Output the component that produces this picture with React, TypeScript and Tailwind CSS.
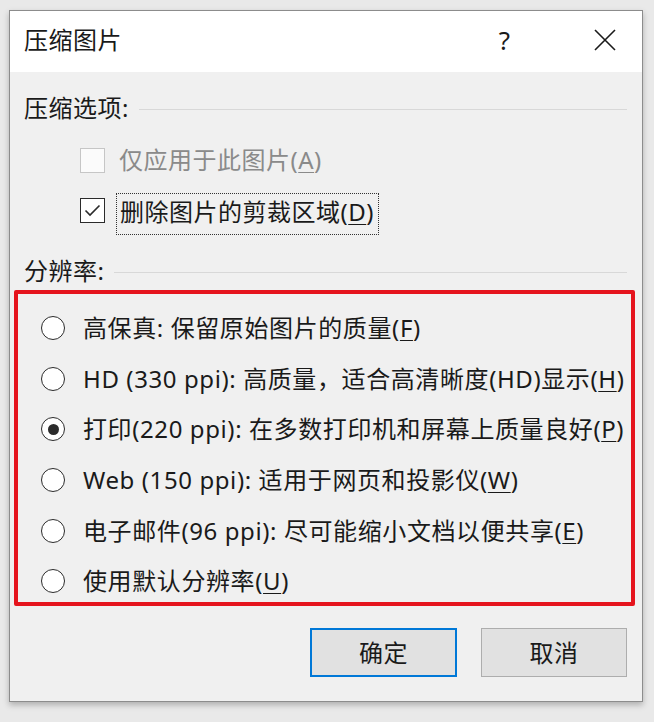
import React from 'react';

const font = { fontFamily: '"Noto Sans", "Noto Sans CJK SC", sans-serif' };

function Mn({ k }: { k: string }) {
  return (
    <span>
      (<span className="underline underline-offset-[3px] decoration-1">{k}</span>)
    </span>
  );
}

function Radio({ checked }: { checked?: boolean }) {
  return (
    <div className="w-[24px] h-[24px] rounded-full border-[1.5px] border-[#2b2b2b] bg-white flex items-center justify-center shrink-0">
      {checked && <div className="w-[11px] h-[11px] rounded-full bg-[#2b2b2b]" />}
    </div>
  );
}

function SectionHeader({ label }: { label: string }) {
  return (
    <div className="flex items-center h-[30px] pl-[14px] pr-[15px]">
      <span className="text-[24px] leading-[30px] text-[#1a1a1a] tracking-[0.5px]">{label}</span>
      <div className="flex-1 h-px bg-[#d8d8d8] ml-[10px] mt-[2px]" />
    </div>
  );
}

export default function App() {
  const options = [
    { text: '高保真: 保留原始图片的质量', key: 'F' },
    { text: 'HD (330 ppi): 高质量，适合高清晰度(HD)显示', key: 'H' },
    { text: '打印(220 ppi): 在多数打印机和屏幕上质量良好', key: 'P', checked: true },
    { text: 'Web (150 ppi): 适用于网页和投影仪', key: 'W' },
    { text: '电子邮件(96 ppi): 尽可能缩小文档以便共享', key: 'E' },
    { text: '使用默认分辨率', key: 'U' },
  ];

  return (
    <div className="w-[654px] h-[722px] bg-[#e9e9e9] pt-[10px] pl-[9px] overflow-hidden" style={font}>
      <div className="w-[634px] h-[692px] border border-[#8c8c8c] bg-[#f0f0f0] flex flex-col shadow-[0_3px_6px_rgba(0,0,0,0.25)]">
        {/* title bar */}
        <div className="h-[61px] bg-white flex items-center pl-[14px] pr-[26px] shrink-0">
          <span className="text-[24px] text-[#1a1a1a] leading-none mt-[-4px] tracking-[0.5px]">压缩图片</span>
          <span className="ml-auto text-[26px] text-[#1a1a1a] leading-none mr-[84px] mt-[-4px]">?</span>
          <svg width="22" height="22" viewBox="0 0 22 22" className="mt-[-4px]">
            <path d="M1 1 L21 21 M21 1 L1 21" stroke="#1a1a1a" strokeWidth="1.6" />
          </svg>
        </div>

        <div className="mt-[21px]">
          <SectionHeader label="压缩选项:" />
        </div>

        {/* checkboxes */}
        <div className="mt-[16px] h-[42px] flex items-center pl-[70px]">
          <div className="w-[25px] h-[25px] border-[1.5px] border-[#c6c6c6] bg-[#fbfbfb] shrink-0" />
          <span className="ml-[14px] text-[24px] leading-[30px] text-[#8a8a8a] tracking-[0.5px]">
            仅应用于此图片<Mn k="A" />
          </span>
        </div>
        <div className="mt-[9px] h-[45px] flex items-start pl-[70px]">
          <div className="mt-[8px] w-[25px] h-[25px] border-[1.5px] border-[#2b2b2b] bg-white shrink-0 flex items-center justify-center">
            <svg width="17" height="13" viewBox="0 0 17 13">
              <path d="M1.5 6.5 L6 11 L15.5 1.5" fill="none" stroke="#2b2b2b" strokeWidth="1.6" />
            </svg>
          </div>
          <div className="mt-[3px] ml-[11px] h-[42px] border border-dotted border-[#333] pl-[3px] pr-[4px] pt-[3px]">
            <span className="text-[24px] leading-[30px] text-[#1a1a1a] tracking-[0.5px]">
              删除图片的剪裁区域<Mn k="D" />
            </span>
          </div>
        </div>

        <div className="mt-[21px]">
          <SectionHeader label="分辨率:" />
        </div>

        {/* resolution options */}
        <div className="mt-[4px] ml-[4px] w-[621px] h-[316px] border-[4px] border-[#e5141d] rounded-[2px] pt-[9px] pl-[23px]">
          {options.map((o) => (
            <div key={o.key} className="h-[50.6px] flex items-center">
              <Radio checked={o.checked} />
              <span className="ml-[18px] text-[24px] leading-[30px] text-[#1a1a1a] whitespace-nowrap tracking-[0.6px]">
                {o.text}
                <Mn k={o.key} />
              </span>
            </div>
          ))}
        </div>

        {/* buttons */}
        <div className="mt-[22px] flex justify-end gap-[24px] pr-[15px]">
          <button className="w-[147px] h-[49px] border-2 border-[#0078d7] bg-[#e1e1e1] text-[24px] text-[#1a1a1a] leading-none tracking-[0.5px]">
            确定
          </button>
          <button className="w-[146px] h-[49px] border border-[#adadad] bg-[#e1e1e1] text-[24px] text-[#1a1a1a] leading-none tracking-[0.5px]">
            取消
          </button>
        </div>
      </div>
    </div>
  );
}
